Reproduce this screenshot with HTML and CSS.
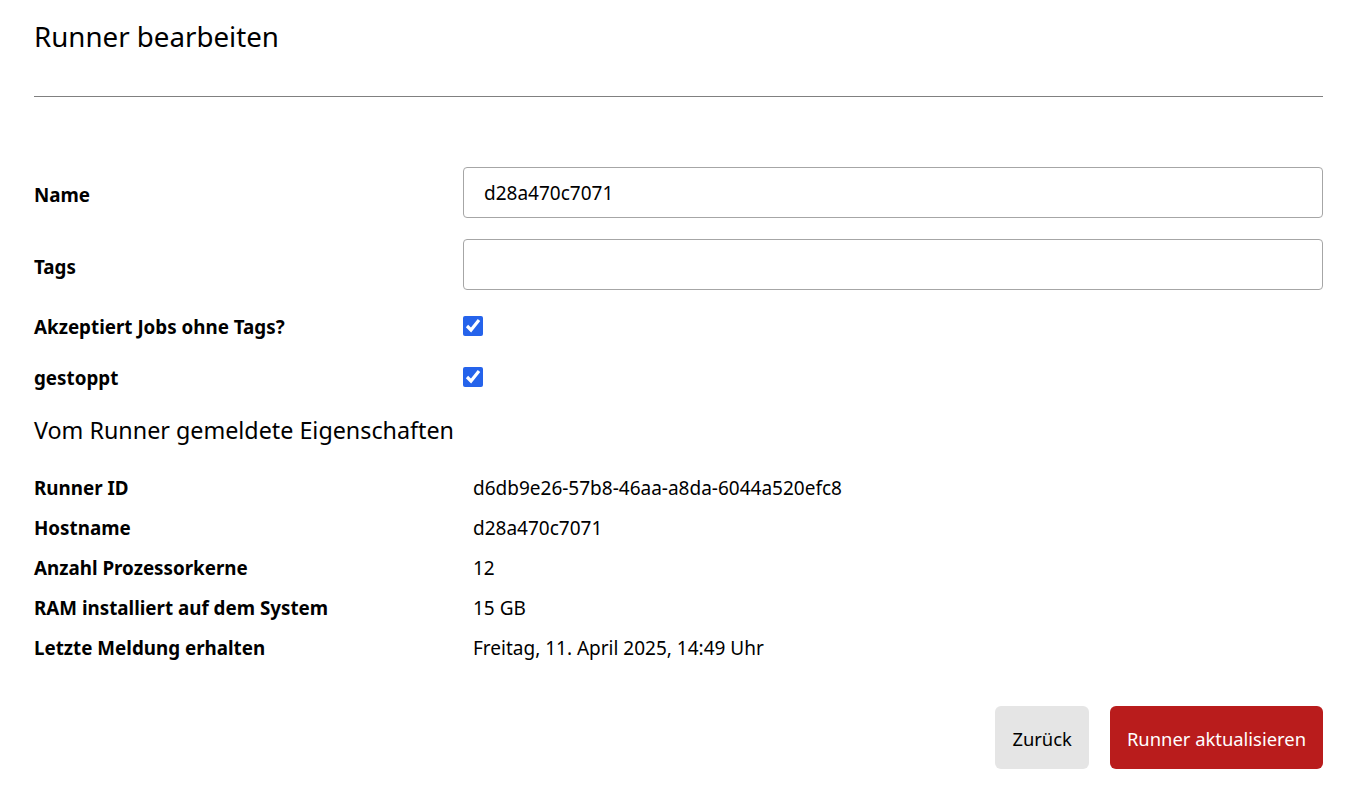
FILE: index.html
```html
<!DOCTYPE html>
<html lang="de">
<head>
<meta charset="utf-8">
<title>Runner bearbeiten</title>
<link rel="stylesheet" href="styles.css">
</head>
<body>
<main class="page">
  <h1 class="title">Runner bearbeiten</h1>
  <hr class="divider">
  <form class="form">
    <div class="field">
      <label class="label" for="name">Name</label>
      <input class="input" id="name" type="text" value="d28a470c7071">
    </div>
    <div class="field">
      <label class="label" for="tags">Tags</label>
      <input class="input" id="tags" type="text" value="">
    </div>
    <div class="field field-check">
      <label class="label" for="untagged">Akzeptiert Jobs ohne Tags?</label>
      <input class="check" id="untagged" type="checkbox" checked>
    </div>
    <div class="field field-check">
      <label class="label" for="paused">gestoppt</label>
      <input class="check" id="paused" type="checkbox" checked>
    </div>
  </form>
  <h2 class="subtitle">Vom Runner gemeldete Eigenschaften</h2>
  <dl class="props">
    <div class="prop"><dt>Runner ID</dt><dd>d6db9e26-57b8-46aa-a8da-6044a520efc8</dd></div>
    <div class="prop"><dt>Hostname</dt><dd>d28a470c7071</dd></div>
    <div class="prop"><dt>Anzahl Prozessorkerne</dt><dd>12</dd></div>
    <div class="prop"><dt>RAM installiert auf dem System</dt><dd>15 GB</dd></div>
    <div class="prop"><dt>Letzte Meldung erhalten</dt><dd>Freitag, 11. April 2025, 14:49 Uhr</dd></div>
  </dl>
  <div class="actions">
    <button class="btn btn-secondary" type="button">Zurück</button>
    <button class="btn btn-primary" type="button">Runner aktualisieren</button>
  </div>
</main>
</body>
</html>
```
FILE: styles.css
```css
* { box-sizing: border-box; }
html, body { margin: 0; background: #fff; }
body {
  font-family: "Noto Sans", "Open Sans", "Liberation Sans", sans-serif;
  font-size: 19px;
  line-height: 28px;
  color: #000;
}
.page {
  padding: 16px 25px 0 34px;
}
.title {
  margin: 0;
  font-size: 27.7px;
  font-weight: 400;
  line-height: 40px;
}
.divider {
  margin: 40px 0 0;
  border: 0;
  border-top: 1px solid #808080;
  height: 0;
}
.form {
  margin-top: 70px;
  display: grid;
  row-gap: 21px;
}
.field {
  display: grid;
  grid-template-columns: 429px 1fr;
  align-items: center;
}
.field-check { min-height: 30px; }
.label {
  font-weight: 700;
  font-size: 18.8px;
  padding-top: 4px;
}
.field-check .label { padding-top: 2px; }
.input {
  height: 51px;
  width: 100%;
  border: 1px solid #a6a6a6;
  border-radius: 4px;
  padding: 0 20px;
  font: inherit;
  color: #000;
  background: #fff;
}
.check {
  margin: 0;
  width: 20px;
  height: 20px;
  accent-color: #2563eb;
}
.subtitle {
  margin: 20px 0 0;
  font-size: 23.3px;
  font-weight: 400;
  line-height: 36px;
}
.props {
  margin: 20px 0 0;
}
.prop {
  display: grid;
  grid-template-columns: 429px 1fr;
  height: 40px;
  align-items: center;
}
.prop dt { font-weight: 700; font-size: 18.8px; }
.prop dd { margin: 0; padding-left: 10px; }
.actions {
  margin-top: 38px;
  display: flex;
  justify-content: flex-end;
  gap: 21px;
}
.btn {
  height: 63px;
  padding: 3px 17px 0;
  border: 0;
  border-radius: 6px;
  font: inherit;
  font-size: 18.4px;
  cursor: pointer;
}
.btn-secondary { background: #e5e5e5; color: #000; }
.btn-primary { background: #b91c1c; color: #fff; }
```
